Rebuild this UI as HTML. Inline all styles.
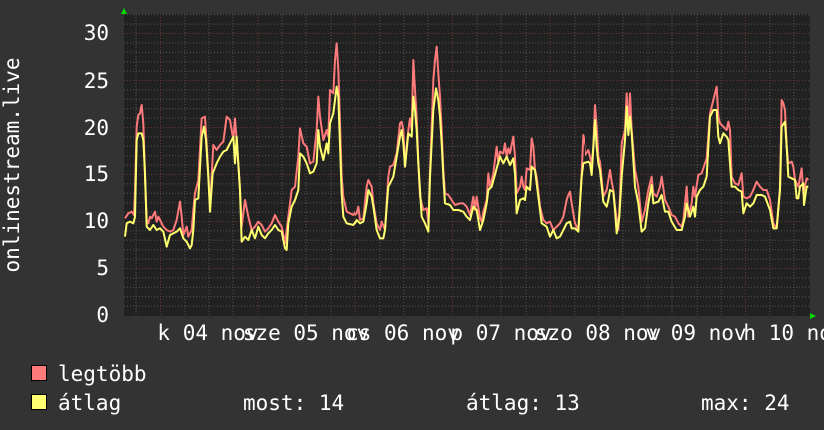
<!DOCTYPE html><html><head><style>
html,body{margin:0;padding:0;background:#333333;}
body{width:824px;height:430px;overflow:hidden;position:relative;font-family:"DejaVu Sans Mono","Liberation Mono",monospace;color:#fff;}
svg{position:absolute;left:0;top:0}
text{font-family:"DejaVu Sans Mono","Liberation Mono",monospace;fill:#fff;font-size:21px}
</style></head><body>
<svg width="824" height="430" viewBox="0 0 824 430">
<defs>
<clipPath id="c1"><rect x="124" y="14" width="231" height="302"/></clipPath>
<clipPath id="c2"><rect x="355" y="14" width="230" height="302"/></clipPath>
<clipPath id="c3"><rect x="585" y="14" width="225" height="302"/></clipPath>
</defs>
<rect x="124" y="14" width="686" height="302" fill="#212121"/>
<g stroke="#555" stroke-width="1" stroke-dasharray="1,2">
<path d="M124 306.1H810M124 296.7H810M124 287.3H810M124 277.9H810M124 259.1H810M124 249.7H810M124 240.3H810M124 230.9H810M124 212.1H810M124 202.7H810M124 193.3H810M124 183.9H810M124 165.1H810M124 155.7H810M124 146.3H810M124 136.9H810M124 118.1H810M124 108.7H810M124 99.3H810M124 89.9H810M124 71.1H810M124 61.7H810M124 52.3H810M124 42.9H810M124 24.1H810M124 14.7H810"/>
<path d="M136 14V316M185 14V316M209 14V316M233 14V316M282 14V316M306 14V316M331 14V316M380 14V316M404 14V316M428 14V316M477 14V316M501 14V316M526 14V316M575 14V316M599 14V316M623 14V316M672 14V316M697 14V316M721 14V316M770 14V316M794 14V316"/>
</g>
<g stroke="#6e3535" stroke-width="1" stroke-dasharray="1,2">
<path d="M124 268.5H810M124 221.5H810M124 174.5H810M124 127.5H810M124 80.5H810M124 33.5H810"/>
<path d="M160.5 14V316M258 14V316M355 14V316M452.5 14V316M550 14V316M648 14V316M745.5 14V316"/>
</g>
<g fill="none" stroke-width="2" stroke-linejoin="round">
<g clip-path="url(#c1)"><g transform="translate(120,30) scale(0.33333)">
<polyline vector-effect="non-scaling-stroke" stroke="#ff7a7a" points="15,565 25,550 35,545 42,555 45,485 50,290 55,255 60,250 65,225 70,280 75,440 80,570 85,580 90,560 95,565 100,555 105,545 110,575 115,560 120,570 130,590 140,600 150,605 160,600 170,570 180,515 185,560 190,615 200,590 205,620 215,600 220,540 225,490 235,450 245,265 255,260 260,340 270,530 280,345 290,360 300,345 310,335 320,260 330,270 340,330 345,265 350,330 360,480 365,590 375,510 385,560 395,600 405,590 415,575 425,585 435,605 445,595 455,580 465,555 475,575 485,590 495,640 505,560 515,480 525,470 535,380 540,295 550,340 560,350 570,400 580,395 590,300 595,200 600,260 610,330 620,300 625,320 630,180 640,190 645,90 650,40 655,120 665,440 670,500 680,545 700,555 710,540 720,535"/>
<polyline vector-effect="non-scaling-stroke" stroke="#ffff70" points="15,620 20,580 30,575 40,580 45,560 50,330 55,310 65,310 70,330 75,430 80,590 90,600 100,585 110,600 120,595 130,605 140,650 150,615 160,610 170,605 180,595 190,625 200,635 210,655 215,645 220,600 225,510 235,505 245,320 252,290 258,330 265,440 270,545 278,430 290,400 300,380 310,365 320,360 330,340 340,320 345,400 350,320 360,480 365,635 375,620 385,630 395,600 405,625 415,590 425,615 435,625 445,610 455,600 465,585 475,600 485,605 495,655 500,660 505,580 515,530 525,510 535,480 540,370 550,380 560,400 570,430 580,425 590,400 595,300 600,350 610,390 620,340 625,370 630,280 640,250 645,210 650,170 655,200 665,490 670,560 680,580 700,585 710,570 720,580"/>
</g></g>
<g clip-path="url(#c2)"><g transform="translate(350,30) scale(0.33333)">
<polyline vector-effect="non-scaling-stroke" stroke="#ff7a7a" points="0,555 10,560 20,550 25,530 30,570 40,565 50,470 55,450 65,470 70,520 80,580 90,600 95,575 105,600 110,520 115,440 120,410 130,405 140,370 150,280 155,275 160,300 165,410 170,350 175,300 180,265 185,300 190,90 195,180 200,260 205,400 210,500 220,540 230,535 235,580 240,430 250,150 255,90 260,50 265,130 270,200 275,300 280,420 285,490 295,495 305,510 315,525 330,520 340,520 350,530 360,555 370,500 375,540 380,500 390,565 395,575 400,545 410,510 415,430 420,470 430,430 440,350 445,400 450,365 460,370 465,340 470,380 475,355 480,370 490,320 495,380 500,490 510,470 515,440 520,470 525,480 530,415 540,420 545,325 550,350 555,420 560,440 570,530 580,570 590,580 600,575 610,600 620,590 630,580 640,560 650,510 655,495 660,485 665,520 675,580 685,600 690,520 695,430 700,315 710,360 720,355"/>
<polyline vector-effect="non-scaling-stroke" stroke="#ffff70" points="0,580 15,580 20,570 30,580 40,575 50,520 55,480 65,500 70,530 80,600 90,625 100,625 105,600 110,530 115,470 130,440 140,380 150,320 155,300 160,340 165,410 175,310 180,315 185,320 190,200 195,240 200,300 205,400 210,480 215,560 225,580 235,605 240,440 250,240 258,175 265,210 270,260 275,340 280,440 285,520 300,525 310,540 325,540 340,545 350,560 360,570 370,530 380,540 390,600 400,570 410,520 415,480 425,470 440,415 450,380 460,400 470,380 480,405 490,385 495,430 500,550 510,510 520,505 525,510 530,470 540,480 545,410 555,420 560,460 575,580 590,590 600,620 610,600 620,625 630,620 640,600 650,580 660,575 665,595 675,595 685,605 690,520 695,440 700,400 710,395 720,400"/>
</g></g>
<g clip-path="url(#c3)"><g transform="translate(580,30) scale(0.33333)">
<polyline vector-effect="non-scaling-stroke" stroke="#ff7a7a" points="0,390 10,315 15,375 25,360 35,400 40,350 45,225 50,290 55,380 60,395 70,500 80,480 90,420 95,455 100,480 105,530 115,600 120,500 125,340 135,300 140,190 145,300 150,190 155,300 165,420 175,470 185,575 195,540 205,480 215,440 220,490 230,500 240,470 245,440 255,510 265,530 275,555 285,560 295,580 305,590 310,570 320,470 325,560 335,520 340,470 345,500 355,435 365,430 375,400 380,385 390,250 400,210 410,170 415,260 420,280 430,290 440,300 445,275 450,300 455,440 465,460 475,465 485,430 490,500 500,505 510,500 520,480 530,455 540,470 550,480 560,480 570,510 580,580 590,595 600,470 605,210 610,220 615,240 620,350 625,400 635,395 640,410 645,450 655,470 665,415 670,490 680,445 685,450"/>
<polyline vector-effect="non-scaling-stroke" stroke="#ffff70" points="0,600 5,470 10,400 25,395 30,400 35,435 45,270 50,350 55,400 60,420 70,515 80,530 85,510 90,480 100,485 105,540 110,610 118,560 125,440 135,330 140,230 145,315 150,260 155,310 165,470 175,520 185,605 195,595 205,520 215,465 220,520 235,515 245,495 255,545 265,545 275,575 290,600 305,600 315,560 320,520 330,560 340,530 345,560 350,500 360,480 370,470 380,440 390,260 400,240 410,240 415,320 420,340 430,310 440,320 445,330 455,470 465,470 475,480 485,485 490,550 500,520 510,530 520,520 530,495 545,495 555,500 570,540 580,595 590,595 600,480 605,290 615,275 620,350 625,440 635,445 645,450 650,505 655,505 660,470 670,460 672,525 680,470 685,470"/>
</g></g>
</g>
<path d="M121 14L124 8L127 14Z" fill="#00dd00"/>
<path d="M810 313L816 316L810 319Z" fill="#00dd00"/>
<g text-anchor="end">
<text x="109" y="40">30</text><text x="109" y="88">25</text><text x="109" y="135">20</text><text x="109" y="181">15</text><text x="109" y="228">10</text><text x="109" y="275">5</text><text x="109" y="322">0</text>
</g>
<g text-anchor="middle">
<text x="208" y="340">k 04 nov</text>
<text x="306" y="340">sze 05 nov</text>
<text x="403" y="340">cs 06 nov</text>
<text x="501" y="340">p 07 nov</text>
<text x="598" y="340">szo 08 nov</text>
<text x="696" y="340">v 09 nov</text>
<text x="794" y="340">h 10 nov</text>
</g>
<text transform="translate(19,165) rotate(-90)" text-anchor="middle">onlinestream.live</text>
<rect x="31.5" y="365.5" width="15" height="15" fill="#ff7a7a" stroke="#000"/>
<rect x="31.5" y="394.5" width="15" height="15" fill="#ffff70" stroke="#000"/>
<text x="58" y="381">legtöbb</text>
<text x="58" y="410">átlag</text>
<text x="243" y="410">most: 14</text>
<text x="466" y="410">átlag: 13</text>
<text x="701" y="410">max: 24</text>
</svg>
</body></html>
